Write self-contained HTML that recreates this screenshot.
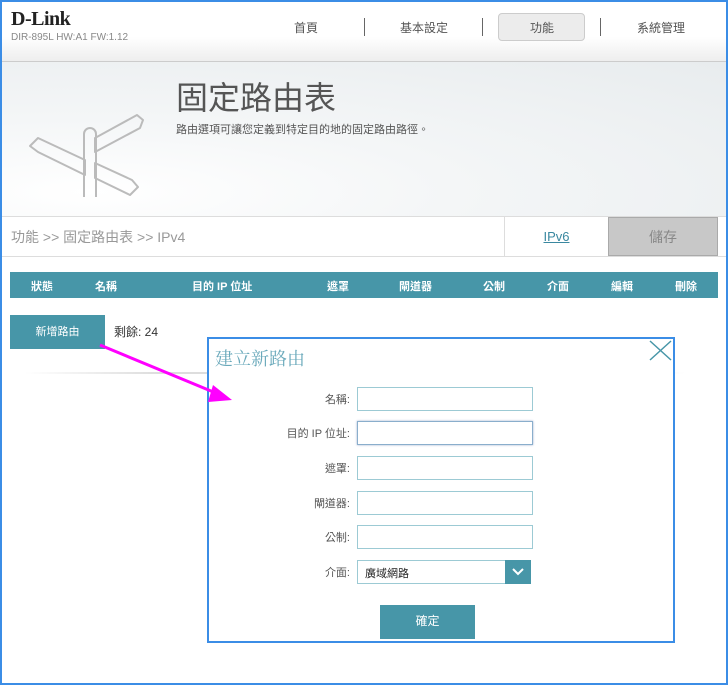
<!DOCTYPE html>
<html><head><meta charset="utf-8"><style>
*{box-sizing:border-box;margin:0;padding:0}
body{width:728px;height:685px;position:relative;overflow:hidden;background:#fff;font-family:"Liberation Sans","Noto Sans CJK TC",sans-serif;color:#555}
.frame{position:absolute;left:0;top:0;width:728px;height:685px;border:2px solid #3b8de6;z-index:20;pointer-events:none}
.abs{position:absolute}
.hdr{left:0;top:0;width:728px;height:62px;background:linear-gradient(#fff 60%,#eee);border-bottom:1px solid #ccc}
.band{left:0;top:62px;width:728px;height:154px;background:radial-gradient(ellipse at 90px 130px,#fff 0,#f4f6f7 40%,#e8ecee 100%)}
.nav{font-size:12px;color:#555;top:19px}
.sep{width:1px;height:18px;background:#666;top:18px}
.th{top:272px;left:10px;width:708px;height:26px;background:#4796a8;color:#fff;font-size:11px;font-weight:bold}
.th span{position:absolute;top:6px}
.lbl{font-size:11px;color:#555;text-align:right;width:150px;left:200px}
.inp{left:357px;width:176px;height:24px;border:1px solid #9ccad4;background:#fff}
</style></head><body>
<div class="frame"></div>
<div class="abs hdr"></div>
<div class="abs" style="left:11px;top:8px;font-family:'Liberation Serif',serif;font-weight:bold;font-size:20px;color:#222;letter-spacing:-0.5px">D-Link</div>
<div class="abs" style="left:11px;top:32px;font-size:10px;color:#888">DIR-895L HW:A1 FW:1.12</div>
<div class="abs nav" style="left:294px">首頁</div>
<div class="abs sep" style="left:364px"></div>
<div class="abs nav" style="left:400px">基本設定</div>
<div class="abs sep" style="left:482px"></div>
<div class="abs" style="left:498px;top:13px;width:87px;height:28px;border:1px solid #ccc;border-radius:4px;background:#ececec"></div>
<div class="abs nav" style="left:530px">功能</div>
<div class="abs sep" style="left:600px"></div>
<div class="abs nav" style="left:637px">系統管理</div>
<div class="abs band"></div>
<svg class="abs" style="left:0;top:0" width="160" height="216" fill="none" stroke="#bbb" stroke-width="2" stroke-linejoin="round">
<path d="M38 138L85 160V175L38 152L30 146Z"/>
<path d="M95 163L132 180L138 187L130 195L95 178Z"/>
<path d="M95 138L137 115L143 120L140 128L95 152Z"/>
<path d="M84 197V134a6 6 0 0 1 12 0V197"/>
</svg>
<div class="abs" style="left:176px;top:73px;font-size:32px;color:#555">固定路由表</div>
<div class="abs" style="left:176px;top:121px;font-size:11px;color:#555">路由選項可讓您定義到特定目的地的固定路由路徑。</div>
<div class="abs" style="left:0;top:216px;width:728px;height:41px;border-top:1px solid #ddd;border-bottom:1px solid #ddd;background:#fff"></div>
<div class="abs" style="left:11px;top:227px;font-size:14px;color:#999">功能 &gt;&gt; 固定路由表 &gt;&gt; IPv4</div>
<div class="abs" style="left:504px;top:217px;width:104px;height:39px;border-left:1px solid #ddd;text-align:center;line-height:39px;font-size:13px;color:#3a88a0;text-decoration:underline">IPv6</div>
<div class="abs" style="left:608px;top:217px;width:110px;height:39px;background:#c8c8c8;border:1px solid #aaa;text-align:center;line-height:39px;font-size:14px;color:#888">儲存</div>
<div class="abs th"><span style="left:21px">狀態</span><span style="left:85px">名稱</span><span style="left:182px">目的 IP 位址</span><span style="left:317px">遮罩</span><span style="left:389px">閘道器</span><span style="left:473px">公制</span><span style="left:537px">介面</span><span style="left:601px">編輯</span><span style="left:665px">刪除</span></div>
<div class="abs" style="left:10px;top:315px;width:95px;height:34px;background:#4796a8;color:#fff;font-size:11px;text-align:center;line-height:34px">新增路由</div>
<div class="abs" style="left:114px;top:323px;font-size:12px;color:#333">剩餘: 24</div>
<div class="abs" style="left:25px;top:372px;width:660px;height:2px;background:linear-gradient(90deg,#fff,#ddd 20%,#ddd 80%,#fff)"></div>
<div class="abs" style="left:207px;top:337px;width:468px;height:306px;border:2px solid #3b8de6;background:#fff"></div>
<div class="abs" style="left:215px;top:345px;font-size:18px;color:#6aa9bb;font-family:'Liberation Serif','Noto Serif CJK SC',serif">建立新路由</div>
<svg class="abs" style="left:649px;top:340px" width="23" height="21"><path d="M1 1L22 20M22 1L1 20" stroke="#4796a8" stroke-width="1.5"/></svg>
<div class="abs lbl" style="top:391px">名稱:</div><div class="abs inp" style="top:387px"></div>
<div class="abs lbl" style="top:425px">目的 IP 位址:</div><div class="abs inp" style="top:421px;border-color:#8aaecc;box-shadow:0 0 2px #9ac"></div>
<div class="abs lbl" style="top:460px">遮罩:</div><div class="abs inp" style="top:456px"></div>
<div class="abs lbl" style="top:495px">閘道器:</div><div class="abs inp" style="top:491px"></div>
<div class="abs lbl" style="top:529px">公制:</div><div class="abs inp" style="top:525px"></div>
<div class="abs lbl" style="top:564px">介面:</div><div class="abs inp" style="top:560px;width:174px"></div>
<div class="abs" style="left:365px;top:565px;font-size:11px;color:#222">廣域網路</div>
<div class="abs" style="left:505px;top:560px;width:26px;height:24px;background:#4796a8"></div>
<svg class="abs" style="left:512px;top:567px" width="12" height="10"><path d="M1 2l5 5 5-5" stroke="#fff" stroke-width="2" fill="none"/></svg>
<div class="abs" style="left:380px;top:605px;width:95px;height:34px;background:#4796a8;color:#fff;font-size:12px;text-align:center;line-height:32px">確定</div>
<svg class="abs" style="left:95px;top:340px;z-index:10" width="145" height="70"><path d="M5 5L128 56" stroke="#f0f" stroke-width="3"/><path d="M137 60L118 45l-5 17z" fill="#f0f"/></svg>
</body></html>
